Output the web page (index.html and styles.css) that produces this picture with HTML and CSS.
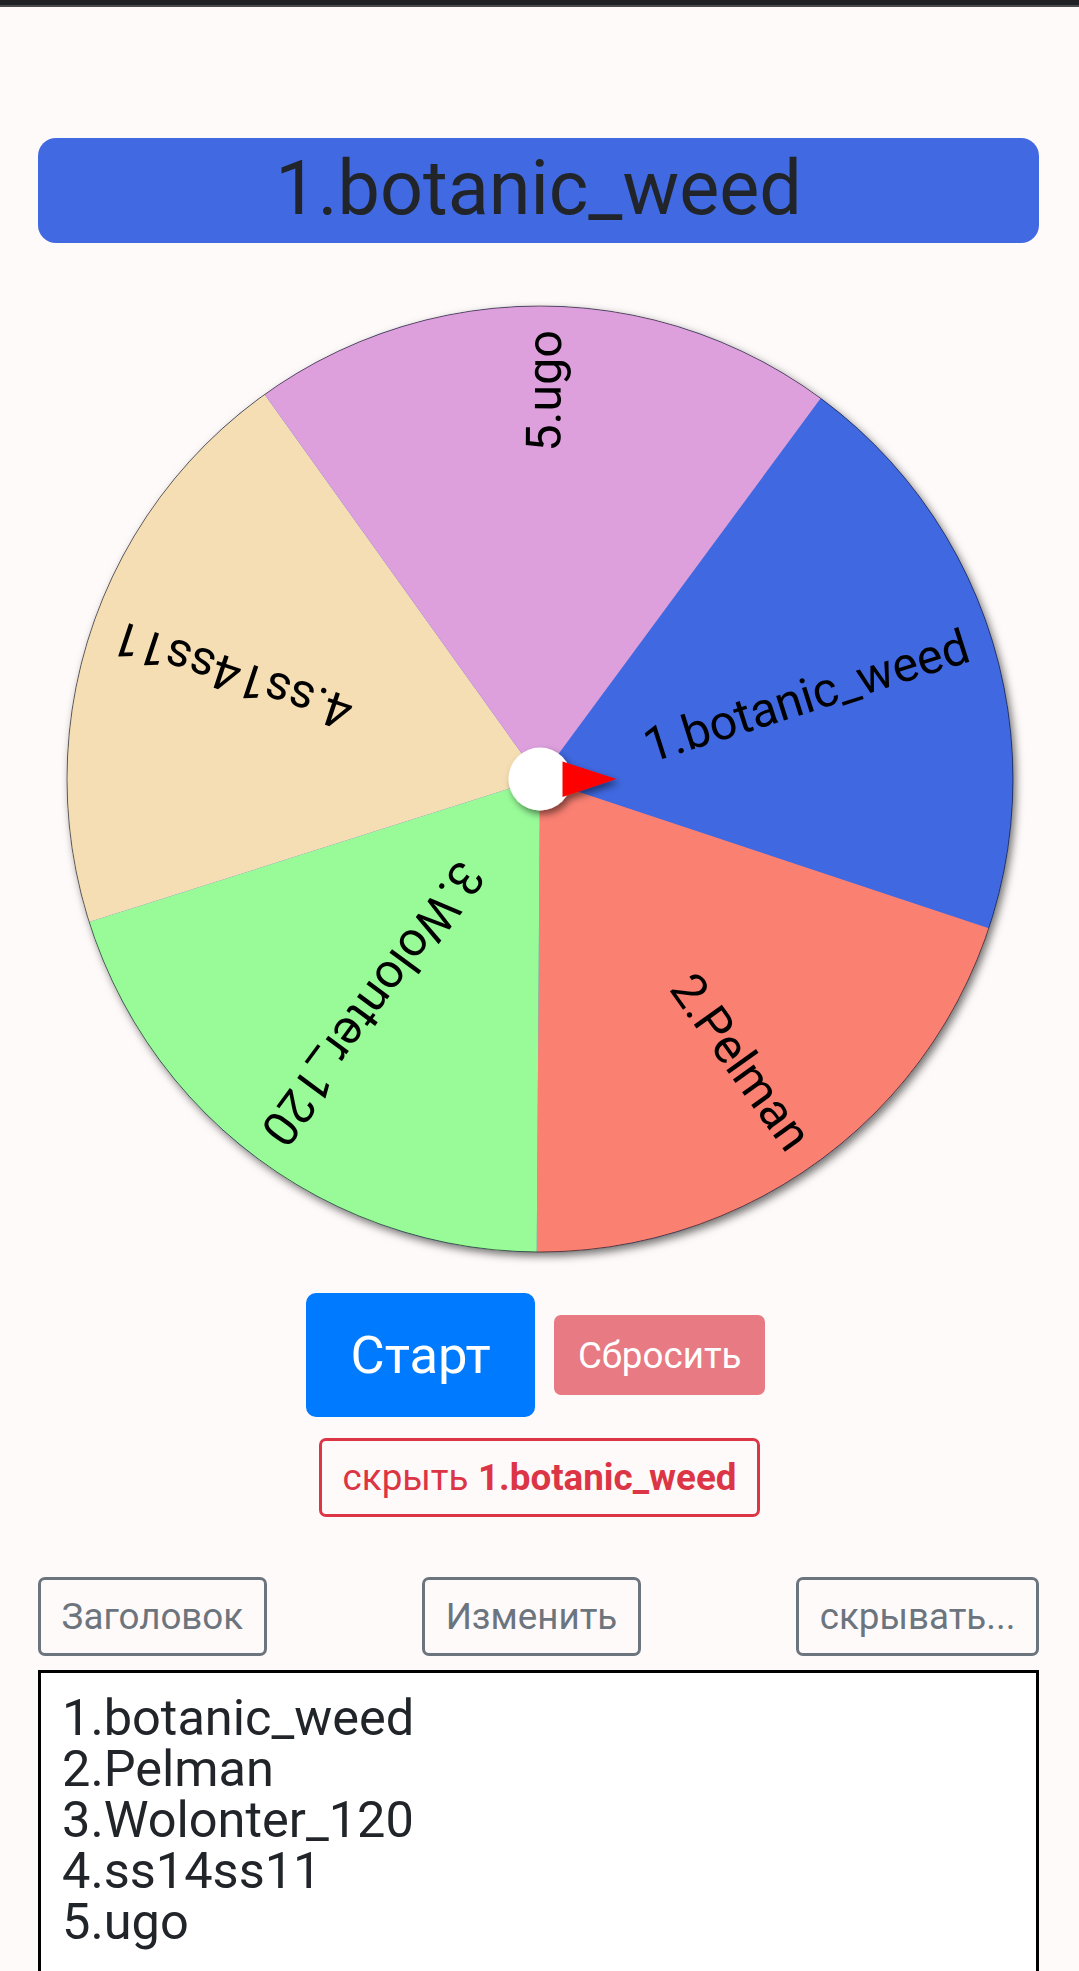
FILE: index.html
```html
<!DOCTYPE html>
<html lang="ru">
<head>
<meta charset="utf-8">
<title>Колесо</title>
<link rel="stylesheet" href="styles.css">
</head>
<body>
<div class="page">
  <div class="statusbar"></div>
  <main class="content">
    <h1 class="winner">1.botanic_weed</h1>

    <svg class="wheel" width="980" height="980" viewBox="0 0 980 980" xmlns="http://www.w3.org/2000/svg">
      <defs>
        <filter id="wheelShadow" x="-10%" y="-10%" width="125%" height="125%">
          <feDropShadow dx="3" dy="4" stdDeviation="4" flood-color="#000" flood-opacity="0.55"/>
        </filter>
        <filter id="hubShadow" x="-50%" y="-50%" width="200%" height="200%">
          <feDropShadow dx="3" dy="4" stdDeviation="3.5" flood-color="#000" flood-opacity="0.5"/>
        </filter>
      </defs>
      <g filter="url(#wheelShadow)">
        <circle cx="490" cy="490" r="473" fill="#4169e1"/>
        <path d="M490 490 L770.7 109.3 A473 473 0 0 1 938.8 639.3 Z" fill="#4169e1"/>
        <path d="M490 490 L938.8 639.3 A473 473 0 0 1 486.7 963 Z" fill="#fa8072"/>
        <path d="M490 490 L486.7 963 A473 473 0 0 1 39.1 633 Z" fill="#98fb98"/>
        <path d="M490 490 L39.1 633 A473 473 0 0 1 214.7 105.4 Z" fill="#f5deb3"/>
        <path d="M490 490 L214.7 105.4 A473 473 0 0 1 770.7 109.3 Z" fill="#dda0dd"/>
      </g>
      <circle cx="490" cy="490" r="473" fill="none" stroke="rgba(0,0,0,0.55)" stroke-width="1"/>
      <g class="labels">
        <text transform="translate(490 490) rotate(-17.6)" x="448" y="18" text-anchor="end">1.botanic_weed</text>
        <text transform="translate(490 490) rotate(54.4)" x="449" y="18" text-anchor="end">2.Pelman</text>
        <text transform="translate(490 490) rotate(126.4)" x="449" y="18" text-anchor="end">3.Wolonter_120</text>
        <text transform="translate(490 490) rotate(198.4)" x="449" y="18" text-anchor="end">4.ss14ss11</text>
        <text transform="translate(490 490) rotate(270.4)" x="449" y="18" text-anchor="end">5.ugo</text>
      </g>
      <g filter="url(#hubShadow)">
        <circle cx="490" cy="490" r="31.5" fill="#fff"/>
        <polygon points="512.5,472.5 512.5,508 566.5,490" fill="#ff0000"/>
      </g>
    </svg>

    <div class="actions">
      <button class="btn btn-start" type="button">Старт</button>
      <button class="btn btn-reset" type="button">Сбросить</button>
    </div>

    <div class="hide-row">
      <button class="btn btn-hide" type="button">скрыть <b>1.botanic_weed</b></button>
    </div>

    <div class="tools">
      <button class="btn btn-tool" type="button">Заголовок</button>
      <button class="btn btn-tool" type="button">Изменить</button>
      <button class="btn btn-tool" type="button">скрывать...</button>
    </div>

    <textarea class="names" rows="6" spellcheck="false">1.botanic_weed
2.Pelman
3.Wolonter_120
4.ss14ss11
5.ugo</textarea>
  </main>
</div>
</body>
</html>
```

FILE: styles.css
```css
html, body {
  margin: 0;
  padding: 0;
  background: #fffafa;
}

.page {
  height: 100vh;
  overflow: hidden;
  font-family: Roboto, "Noto Sans", sans-serif;
  color: #212529;
}

.statusbar {
  height: 5px;
  background: #202124;
  border-bottom: 2px solid #4a4a4c;
}

.content {
  padding: 0 40px 0 38px;
}

.winner {
  margin: 131px 0 0;
  height: 105px;
  box-sizing: border-box;
  padding-bottom: 5px;
  background: #4169e1;
  border-radius: 18px;
  font-weight: 400;
  font-size: 75.5px;
  line-height: 100px;
  text-align: center;
  color: #212529;
}

.wheel {
  display: block;
  margin: 46px auto 0;
  position: relative;
  left: 1px;
}

.labels text {
  font-family: Roboto, "Noto Sans", sans-serif;
  font-size: 48.5px;
  fill: #000;
}

.btn {
  display: inline-flex;
  align-items: center;
  justify-content: center;
  box-sizing: border-box;
  margin: 0;
  border: 3px solid transparent;
  border-radius: 7px;
  background: transparent;
  font-family: Roboto, "Noto Sans", sans-serif;
  font-weight: 400;
  white-space: nowrap;
  cursor: pointer;
}

.actions {
  display: flex;
  justify-content: center;
  align-items: center;
  gap: 19px;
  margin-top: 24px;
  padding-right: 6px;
}

.btn-start {
  height: 124px;
  padding: 0 41.6px;
  font-size: 52.5px;
  color: #fff;
  background: #007bff;
  border-color: #007bff;
  border-radius: 10px;
}

.btn-reset {
  height: 80px;
  padding: 0 20.6px;
  font-size: 36.75px;
  color: #fff;
  background: #e87a84;
  border-color: #e87a84;
}

.hide-row {
  display: flex;
  justify-content: center;
  margin-top: 21px;
  padding-left: 2px;
}

.btn-hide {
  height: 79px;
  padding: 0 20.6px;
  font-size: 36.75px;
  color: #dc3545;
  border-color: #dc3545;
}

.btn-hide b {
  font-weight: 700;
  margin-left: 0.26em;
}

.tools {
  display: flex;
  justify-content: space-between;
  margin-top: 60px;
}

.btn-tool {
  height: 79px;
  padding: 0 20.6px;
  font-size: 36.75px;
  color: #6c757d;
  border-color: #6c757d;
}

.names {
  display: block;
  box-sizing: border-box;
  width: 100%;
  height: 330px;
  margin: 14px 0 0;
  padding: 19px 17px 17px 21px;
  border: 3px solid #000;
  border-radius: 0;
  background: #fff;
  resize: none;
  font-family: Roboto, "Noto Sans", sans-serif;
  font-size: 50.5px;
  line-height: 51px;
  color: #212529;
  outline: none;
}
```
